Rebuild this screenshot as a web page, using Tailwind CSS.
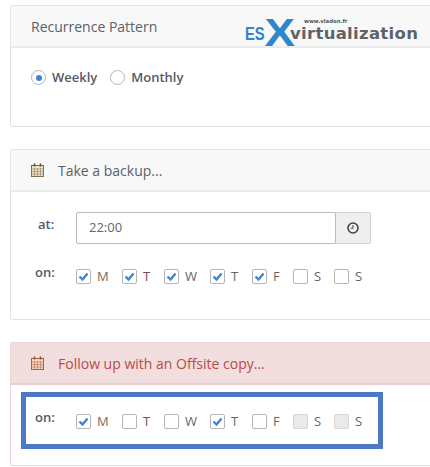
<!DOCTYPE html>
<html lang="en">
<head>
    <meta charset="UTF-8">
    <title>Backup schedule</title>
    <script src="https://cdn.jsdelivr.net/npm/@tailwindcss/browser@4"></script>
</head>
<body class="relative w-[430px] h-[467px] overflow-hidden bg-white font-['Open_Sans',sans-serif] text-[#555]">

    <!-- watermark logo -->
    <div class="absolute left-[245px] top-[15px] w-[180px] h-[33px]">
        <span class="absolute left-0 top-[10px] text-[18px] leading-[18px] font-bold text-[#2f86c8] font-['Liberation_Sans',sans-serif] scale-x-[0.82] origin-left">ES</span>
        <span class="absolute left-[22px] top-[-1px] text-[38px] leading-[38px] font-bold text-[#2f86c8] font-['Liberation_Sans',sans-serif] scale-x-[1.2]">X</span>
        <span class="absolute left-[59px] top-[2px] text-[5.3px] leading-[8px] font-bold text-[#555] font-['DejaVu_Sans',sans-serif]">www.vladon.fr</span>
        <span class="absolute left-[45px] top-[7px] text-[16.5px] leading-[24px] font-bold tracking-[0.3px] text-[#606366] font-['DejaVu_Sans',sans-serif]">virtualization</span>
    </div>

    <div class="flex flex-col pl-[10px] pt-[5px] w-[450px]">

        <!-- recurrence -->
        <section class="h-[122px] border border-[#e3e3e3] rounded-[2px]">
            <div class="h-[42px] flex items-center pl-[20px] bg-[#f8f8f8] border-b-[2px] border-[#ececec] text-[14px] text-[#5a5f69]">Recurrence Pattern</div>
            <div class="flex items-center pl-[20px] pt-[20px] text-[13px] font-semibold text-[#555a64]">
                <span class="w-[15px] h-[15px] rounded-full border border-[#b5b5b5] flex items-center justify-center"><span class="w-[6px] h-[6px] rounded-full bg-[#3d85d0]"></span></span>
                <span class="ml-[6px]">Weekly</span>
                <span class="ml-[13px] w-[15px] h-[15px] rounded-full border border-[#b5b5b5]"></span>
                <span class="ml-[6px]">Monthly</span>
            </div>
        </section>

        <!-- backup -->
        <section class="mt-[22px] h-[171px] border border-[#e3e3e3] rounded-[2px]">
            <div class="h-[42px] flex items-center pl-[20px] bg-[#f8f8f8] border-b-[2px] border-[#ececec] text-[14px] text-[#5a5f69]">
                <svg class="w-[13px] h-[14px] mr-[14px]" viewBox="0 0 13 14"><rect x="0.5" y="2.5" width="12" height="11" fill="#f3e3c8" stroke="#7a6a55"/><path d="M0 6h13M0 8.5h13M0 11h13M3.5 5v9M6.5 5v9M9.5 5v9" stroke="#9a8a72" stroke-width="0.7"/><path d="M3.5 0.5v3M9.5 0.5v3" stroke="#5a4d3f" stroke-width="1.6"/></svg>
                Take a backup...
            </div>
            <div class="flex items-center pt-[20px] pl-[27px]">
                <span class="w-[27px] text-[13px] font-semibold text-[#555a64] -mt-[6px]">at:</span>
                <div class="ml-[11px] flex h-[32px]">
                    <div class="w-[260px] flex items-center pl-[12px] border border-[#bdbdbd] rounded-l-[2px] text-[13px] text-[#666]">22:00</div>
                    <div class="w-[35px] flex items-center justify-center bg-[#efefef] border border-l-0 border-[#d0d0d0] rounded-r-[2px]">
                        <svg class="w-[12px] h-[12px]" viewBox="0 0 12 12" fill="none" stroke="#444"><circle cx="6" cy="6" r="5" stroke-width="1.6"/><path d="M6 3v3.3H3.8" stroke-width="1"/></svg>
                    </div>
                </div>
            </div>
            <div class="flex pt-[19px] pl-[24px]">
                <span class="w-[30px] text-[13px] font-semibold text-[#555a64]">on:</span>
                <div class="ml-[11px] mt-[2px] flex items-center h-[23px] text-[13px] text-[#666]">
                    <span class="w-[15px] h-[15px] border border-[#b5b5b5] rounded-[2px] flex items-center justify-center"><svg class="w-[11px] h-[11px]" viewBox="0 0 11 11" fill="none" stroke="#3d85d0" stroke-width="2.4"><path d="M1.5 5.5l3 3 5-6"/></svg></span>
                    <span class="w-[31px] pl-[6px] text-[#7a6a5a]">M</span>
                    <span class="w-[15px] h-[15px] border border-[#b5b5b5] rounded-[2px] flex items-center justify-center"><svg class="w-[11px] h-[11px]" viewBox="0 0 11 11" fill="none" stroke="#3d85d0" stroke-width="2.4"><path d="M1.5 5.5l3 3 5-6"/></svg></span>
                    <span class="w-[27px] pl-[6px] text-[#7a4a5a]">T</span>
                    <span class="w-[15px] h-[15px] border border-[#b5b5b5] rounded-[2px] flex items-center justify-center"><svg class="w-[11px] h-[11px]" viewBox="0 0 11 11" fill="none" stroke="#3d85d0" stroke-width="2.4"><path d="M1.5 5.5l3 3 5-6"/></svg></span>
                    <span class="w-[31px] pl-[6px]">W</span>
                    <span class="w-[15px] h-[15px] border border-[#b5b5b5] rounded-[2px] flex items-center justify-center"><svg class="w-[11px] h-[11px]" viewBox="0 0 11 11" fill="none" stroke="#3d85d0" stroke-width="2.4"><path d="M1.5 5.5l3 3 5-6"/></svg></span>
                    <span class="w-[27px] pl-[6px]">T</span>
                    <span class="w-[15px] h-[15px] border border-[#b5b5b5] rounded-[2px] flex items-center justify-center"><svg class="w-[11px] h-[11px]" viewBox="0 0 11 11" fill="none" stroke="#3d85d0" stroke-width="2.4"><path d="M1.5 5.5l3 3 5-6"/></svg></span>
                    <span class="w-[26px] pl-[6px]">F</span>
                    <span class="w-[15px] h-[15px] border border-[#b5b5b5] rounded-[2px]"></span>
                    <span class="w-[26px] pl-[6px]">S</span>
                    <span class="w-[15px] h-[15px] border border-[#b5b5b5] rounded-[2px]"></span>
                    <span class="w-[26px] pl-[6px]">S</span>
                </div>
            </div>
        </section>

        <!-- offsite copy -->
        <section class="mt-[22px] h-[124px] border border-[#f0d3d9] rounded-[2px]">
            <div class="h-[42px] flex items-center pl-[20px] bg-[#f2dede] border-b-[2px] border-[#ebccd1] text-[14px] text-[#b94a48]">
                <svg class="w-[13px] h-[14px] mr-[14px]" viewBox="0 0 13 14"><rect x="0.5" y="2.5" width="12" height="11" fill="#f5dcc0" stroke="#a85a45"/><path d="M0 6h13M0 8.5h13M0 11h13M3.5 5v9M6.5 5v9M9.5 5v9" stroke="#b87a66" stroke-width="0.7"/><path d="M3.5 0.5v3M9.5 0.5v3" stroke="#a04a3a" stroke-width="1.6"/></svg>
                Follow up with an Offsite copy...
            </div>
            <div class="mt-[7px] ml-[10px] w-[362px] h-[57px] border-[5px] border-[#4d78c8] flex pt-[11px] pl-[9px]">
                <span class="w-[30px] text-[13px] font-semibold text-[#555a64]">on:</span>
                <div class="ml-[11px] mt-[2px] flex items-center h-[23px] text-[13px] text-[#666]">
                    <span class="w-[15px] h-[15px] border border-[#b5b5b5] rounded-[2px] flex items-center justify-center"><svg class="w-[11px] h-[11px]" viewBox="0 0 11 11" fill="none" stroke="#3d85d0" stroke-width="2.4"><path d="M1.5 5.5l3 3 5-6"/></svg></span>
                    <span class="w-[31px] pl-[6px] text-[#7a6a5a]">M</span>
                    <span class="w-[15px] h-[15px] border border-[#b5b5b5] rounded-[2px]"></span>
                    <span class="w-[27px] pl-[6px] text-[#7a4a5a]">T</span>
                    <span class="w-[15px] h-[15px] border border-[#b5b5b5] rounded-[2px]"></span>
                    <span class="w-[31px] pl-[6px]">W</span>
                    <span class="w-[15px] h-[15px] border border-[#b5b5b5] rounded-[2px] flex items-center justify-center"><svg class="w-[11px] h-[11px]" viewBox="0 0 11 11" fill="none" stroke="#3d85d0" stroke-width="2.4"><path d="M1.5 5.5l3 3 5-6"/></svg></span>
                    <span class="w-[27px] pl-[6px]">T</span>
                    <span class="w-[15px] h-[15px] border border-[#b5b5b5] rounded-[2px]"></span>
                    <span class="w-[26px] pl-[6px]">F</span>
                    <span class="w-[15px] h-[15px] border border-[#d5d5d5] bg-[#eaeaea] rounded-[2px]"></span>
                    <span class="w-[26px] pl-[6px]">S</span>
                    <span class="w-[15px] h-[15px] border border-[#d5d5d5] bg-[#eaeaea] rounded-[2px]"></span>
                    <span class="w-[26px] pl-[6px]">S</span>
                </div>
            </div>
        </section>
    </div>
</body>
</html>
